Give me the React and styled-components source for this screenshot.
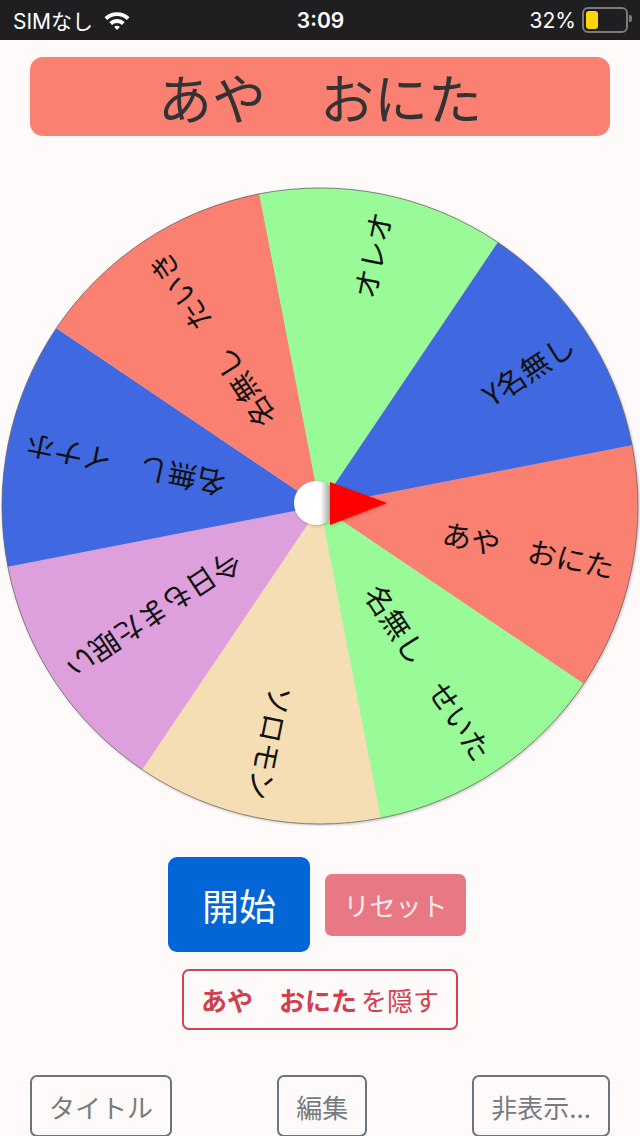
import styled, { createGlobalStyle } from "styled-components"

const GlobalStyle = createGlobalStyle`
  body {
    margin: 0;
    background: #fffafa;
    font-family: "Noto Sans CJK JP", "Noto Sans", sans-serif;
  }
`

const Screen = styled.div`
  width: 640px;
  min-height: 1136px;
  display: flex;
  flex-direction: column;
  overflow: hidden;
`

const StatusBar = styled.div`
  height: 40px;
  background: #1f1f21;
  color: #fff;
  display: flex;
  align-items: center;
  justify-content: space-between;
  padding: 0 12px 0 13px;
  font-family: Inter, "Noto Sans CJK JP", sans-serif;
  font-size: 21px;
`
const StatusSide = styled.div`
  flex: 1;
  display: flex;
  align-items: center;
  gap: ${p => p.gap || 0}px;
  justify-content: ${p => (p.right ? "flex-end" : "flex-start")};
`
const Clock = styled.div`
  font-weight: 600;
  font-size: 21px;
`
const Battery = styled.div`
  width: 38px;
  height: 18px;
  border: 2px solid #7a7a7c;
  border-radius: 6px;
  padding: 2px;
  box-sizing: content-box;
  position: relative;
  &::after {
    content: "";
    position: absolute;
    right: -6px;
    top: 6px;
    width: 3px;
    height: 7px;
    border-radius: 0 2px 2px 0;
    background: #7a7a7c;
  }
`
const BatteryLevel = styled.div`
  height: 100%;
  border-radius: 3px;
  background: #ffd60a;
`

const Main = styled.main`
  display: flex;
  flex-direction: column;
  align-items: center;
  padding-top: 17px;
`
const TitleBox = styled.div`
  width: 580px;
  height: 79px;
  background: salmon;
  border-radius: 13px;
  display: flex;
  align-items: center;
  justify-content: center;
  font-size: 54px;
  color: #333;
`
const WheelBox = styled.div`
  margin-top: 50px;
  width: 640px;
  height: 640px;
`
const ButtonRow = styled.div`
  margin-top: 31px;
  padding-right: 6px;
  display: flex;
  align-items: center;
  gap: 15px;
`
const StartButton = styled.button`
  width: 142px;
  height: 95px;
  border: none;
  border-radius: 9px;
  background: #0366d6;
  color: #fff;
  font-family: inherit;
  font-size: 37px;
  padding: 0;
`
const ResetButton = styled.button`
  width: 141px;
  height: 62px;
  border: none;
  border-radius: 7px;
  background: #e87984;
  color: #fcecee;
  font-family: inherit;
  font-size: 26px;
  padding: 0;
`
const HideButton = styled.button`
  margin-top: 17px;
  height: 61px;
  padding: 0 17px;
  border: 2px solid #cf4555;
  border-radius: 7px;
  background: transparent;
  color: #d23f4f;
  font-family: inherit;
  font-size: 26px;
  b {
    font-weight: 700;
    margin-right: 4px;
  }
`
const BottomBar = styled.div`
  margin-top: 45px;
  width: 100%;
  box-sizing: border-box;
  padding: 0 30px;
  display: flex;
  justify-content: space-between;
`
const OutlineButton = styled.button`
  height: 62px;
  padding: 0 ${p => p.pad || 17}px;
  border: 2px solid #6c757d;
  border-radius: 7px;
  background: transparent;
  color: #767b80;
  font-family: inherit;
  font-size: 26px;
`

const segments = [
  { color: "salmon", label: "あや　おにた" },
  { color: "palegreen", label: "名無し　せいた" },
  { color: "wheat", label: "ソロモン" },
  { color: "plum", label: "今日もまた眠い" },
  { color: "royalblue", label: "名無し　イナホ" },
  { color: "salmon", label: "名無し　たいき" },
  { color: "palegreen", label: "オレオ" },
  { color: "royalblue", label: "Y名無し" },
]

const CX = 320
const CY = 320
const R = 318
const OFFSET = -11

function point(deg, r) {
  const a = (deg * Math.PI) / 180
  return [CX + r * Math.cos(a), CY + r * Math.sin(a)]
}

function WifiIcon() {
  return (
    <svg width="28" height="21" viewBox="0 0 28 21">
      <path d="M1.5 7.2 A18 18 0 0 1 26.5 7.2 L23.8 10 A14.2 14.2 0 0 0 4.2 10 Z" fill="#fff" />
      <path d="M6.3 12.1 A11.2 11.2 0 0 1 21.7 12.1 L19 14.9 A7.4 7.4 0 0 0 9 14.9 Z" fill="#fff" />
      <path d="M11.1 17 A4.3 4.3 0 0 1 16.9 17 L14 20 Z" fill="#fff" />
    </svg>
  )
}

function Wheel() {
  const step = 360 / segments.length
  return (
    <svg width="640" height="640" viewBox="0 0 640 640">
      <defs>
        <filter id="shade" x="-10%" y="-10%" width="120%" height="120%">
          <feDropShadow dx="1" dy="1" stdDeviation="1.5" floodColor="#000" floodOpacity="0.25" />
        </filter>
        <linearGradient id="knob" x1="0" x2="1" y1="0" y2="0">
          <stop offset="0" stopColor="#fff" />
          <stop offset="0.6" stopColor="#fff" />
          <stop offset="0.78" stopColor="#b5b5b5" />
          <stop offset="1" stopColor="#9a9a9a" />
        </linearGradient>
      </defs>
      <g filter="url(#shade)">
        {segments.map((s, i) => {
          const a0 = OFFSET + i * step
          const [x0, y0] = point(a0, R)
          const [x1, y1] = point(a0 + step, R)
          return (
            <path
              key={i}
              d={`M${CX} ${CY} L${x0} ${y0} A${R} ${R} 0 0 1 ${x1} ${y1} Z`}
              fill={s.color}
            />
          )
        })}
      </g>
      <circle cx={CX} cy={CY} r={R} fill="none" stroke="#666" strokeWidth="0.8" />
      {segments.map((s, i) => {
        const mid = OFFSET + i * step + step / 2
        return (
          <text
            key={i}
            x={CX + 300}
            y={CY}
            transform={`rotate(${mid} ${CX} ${CY})`}
            textAnchor="end"
            dominantBaseline="central"
            fontSize="29"
            fill="#111"
            fontFamily='"Noto Sans CJK JP", sans-serif'
          >
            {s.label}
          </text>
        )
      })}
      <circle cx={CX - 4} cy={CY - 3} r="22" fill="url(#knob)" filter="url(#shade)" />
      <polygon
        points={`${CX + 10},${CY - 24} ${CX + 67},${CY - 3} ${CX + 10},${CY + 19}`}
        fill="#ff0000"
        filter="url(#shade)"
      />
    </svg>
  )
}

export default function App() {
  return (
    <Screen>
      <GlobalStyle />
      <StatusBar>
        <StatusSide gap={10}>
          <span>SIMなし</span>
          <WifiIcon />
        </StatusSide>
        <Clock>3:09</Clock>
        <StatusSide right gap={6}>
          <span>32%</span>
          <Battery>
            <BatteryLevel style={{ width: "32%" }} />
          </Battery>
        </StatusSide>
      </StatusBar>
      <Main>
        <TitleBox>あや　おにた</TitleBox>
        <WheelBox>
          <Wheel />
        </WheelBox>
        <ButtonRow>
          <StartButton>開始</StartButton>
          <ResetButton>リセット</ResetButton>
        </ButtonRow>
        <HideButton>
          <b>あや　おにた</b>を隠す
        </HideButton>
        <BottomBar>
          <OutlineButton pad={17}>タイトル</OutlineButton>
          <OutlineButton pad={17}>編集</OutlineButton>
          <OutlineButton pad={17}>非表示...</OutlineButton>
        </BottomBar>
      </Main>
    </Screen>
  )
}
